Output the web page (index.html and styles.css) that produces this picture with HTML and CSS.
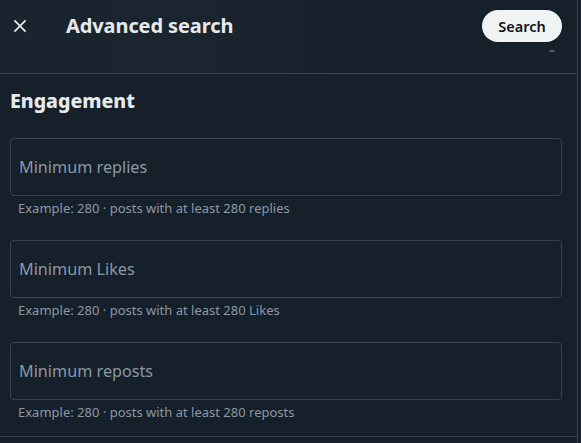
FILE: index.html
```html
<!DOCTYPE html>
<html>
<head>
<meta charset="utf-8">
<link rel="stylesheet" href="styles.css">
</head>
<body>
<div class="modal">
  <div class="top">
    <div class="header">
      <button class="close" aria-label="Close">
        <svg viewBox="0 0 24 24" width="20" height="20"><path d="M10.59 12L4.54 5.960l1.42-1.42L12 10.59l6.04-6.05 1.42 1.42L13.41 12l6.05 6.04-1.42 1.42L12 13.41l-6.04 6.05-1.42-1.42L10.59 12z" fill="#e7e9ea"/></svg>
      </button>
      <h1 class="title">Advanced search</h1>
      <button class="search">Search</button>
    </div>
    <div class="scrollhint"></div>
  </div>
  <div class="section">
    <h2 class="heading">Engagement</h2>
    <div class="field">
      <div class="box"><span class="ph">Minimum replies</span></div>
      <div class="hint">Example: 280 · posts with at least 280 replies</div>
    </div>
    <div class="field">
      <div class="box"><span class="ph">Minimum Likes</span></div>
      <div class="hint">Example: 280 · posts with at least 280 Likes</div>
    </div>
    <div class="field">
      <div class="box"><span class="ph">Minimum reposts</span></div>
      <div class="hint">Example: 280 · posts with at least 280 reposts</div>
    </div>
  </div>
</div>
</body>
</html>
```
FILE: styles.css
```css
html, body {
  margin: 0;
  padding: 0;
  background: #15202b;
}
body {
  font-family: "Noto Sans", "Segoe UI", sans-serif;
  color: #e7e9ea;
  height: 443px;
  overflow: hidden;
}
.modal {
  width: 578px;
  border-right: 1px solid #38444d;
  height: 443px;
  box-sizing: border-box;
}
.top {
  height: 74px;
  border-bottom: 1px solid #38444d;
  box-sizing: border-box;
  position: relative;
  background: linear-gradient(90deg, #1a242e 0%, #1b252f 35%, #16202a 60%, #15202b 100%);
}
.header {
  height: 52px;
  display: flex;
  align-items: center;
  padding: 0 15px 0 10px;
}
.close {
  width: 20px;
  height: 20px;
  padding: 0;
  border: 0;
  background: transparent;
  display: flex;
  align-items: center;
  justify-content: center;
  margin-right: 36px;
}
.close svg { display: block; }
.title {
  margin: 0;
  font-size: 20px;
  font-weight: 700;
  line-height: 24px;
  flex: 1;
  letter-spacing: -0.1px;
}
.search {
  height: 32px;
  width: 80px;
  padding: 0;
  border: 0;
  border-radius: 16px;
  background: #eff3f4;
  color: #0f1419;
  font-family: inherit;
  font-size: 14.5px;
  font-weight: 600;
}
.scrollhint {
  position: absolute;
  right: 22px;
  top: 50px;
  width: 6px;
  height: 2px;
  border-radius: 1px;
  background: #4f5a63;
}
.section {
  padding: 12px 15px 0 10px;
  height: 363px;
  border-bottom: 1px solid #38444d;
  box-sizing: border-box;
}
.heading {
  margin: 1px 0 23px 0;
  font-size: 19.5px;
  font-weight: 800;
  line-height: 28px;
}
.field {
  margin-bottom: 24px;
}
.box {
  height: 58px;
  border: 1px solid #38444d;
  border-radius: 4px;
  box-sizing: border-box;
  display: flex;
  align-items: center;
  padding: 0 8px;
}
.ph {
  font-size: 16.2px;
  color: #8b98a5;
}
.hint {
  font-size: 13px;
  color: #8b98a5;
  padding: 4px 8px 0 8px;
  line-height: 16px;
}
```
